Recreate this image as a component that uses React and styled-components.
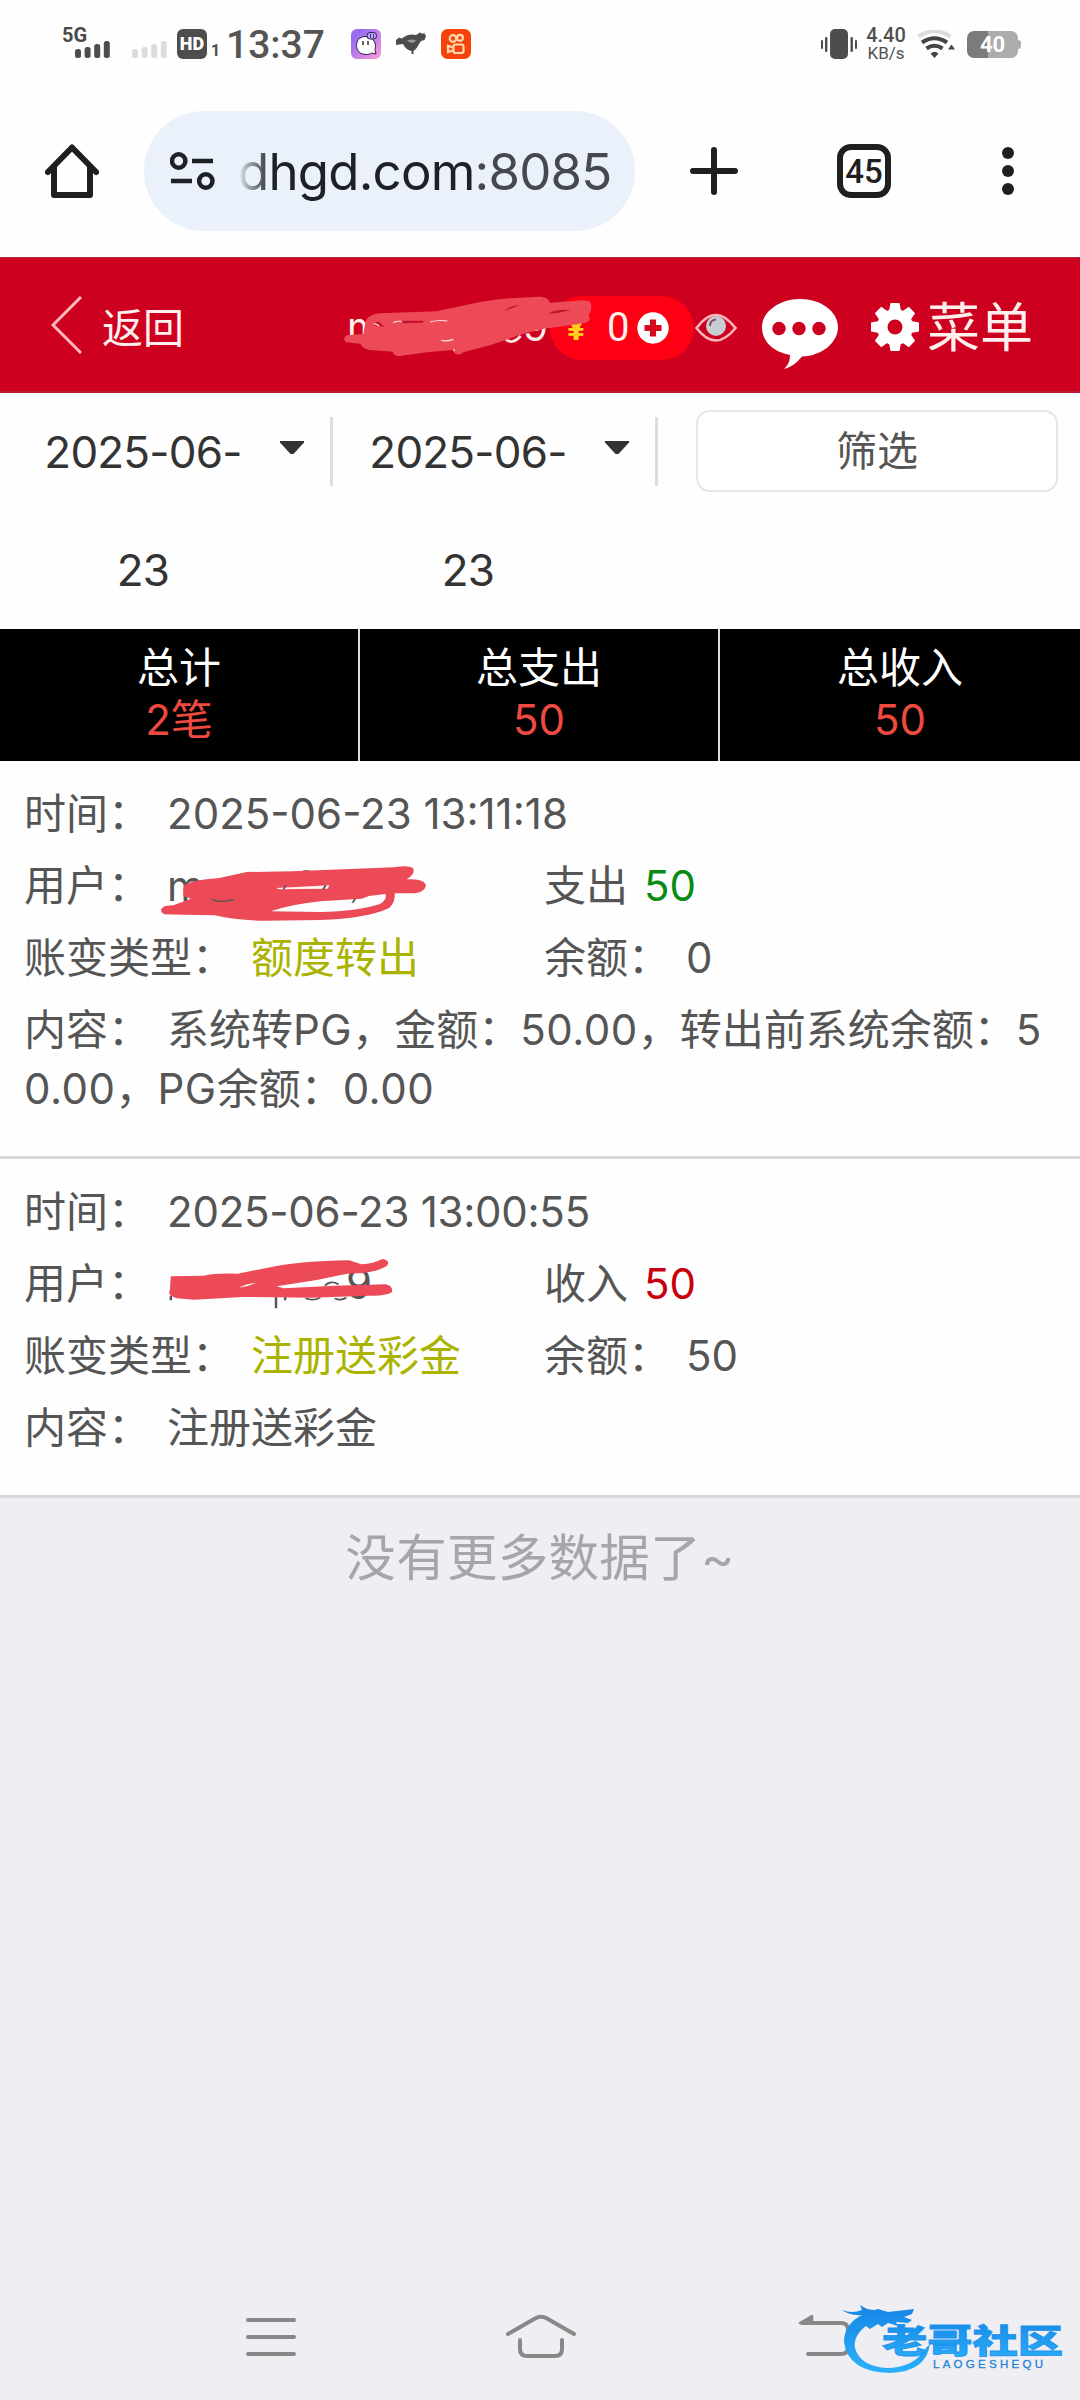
import React from "react";
import styled, { createGlobalStyle } from "styled-components";

const Global = createGlobalStyle`
  * { box-sizing: border-box; }
  body { margin: 0; background: #efeef3; }
  svg { display: block; flex: none; }
`;

const Screen = styled.div`
  width: 1080px;
  height: 2400px;
  display: flex;
  flex-direction: column;
  background: #efeef3;
  overflow: hidden;
  font-family: Inter, "Noto Sans CJK SC", sans-serif;
  font-size: 42px;
  color: #555;
`;

/* ---------- status bar ---------- */
const StatusBar = styled.div`
  height: 87px;
  flex: none;
  display: flex;
  justify-content: space-between;
  align-items: flex-start;
  padding: 25px 59px 0 62px;
  background: #fefefe;
`;
const StatusGroup = styled.div`
  display: flex;
  align-items: center;
  height: 38px;
`;
const Network = styled.div`
  position: relative;
  width: 49px;
  height: 38px;
  display: flex;
  align-items: flex-end;
  padding: 0 0 5px 13px;
`;
const NetworkLabel = styled.span`
  position: absolute;
  left: 0;
  top: 0;
  font: 700 20px/20px Roboto, sans-serif;
  color: #4a4a4a;
`;
const SecondSim = styled.span`
  margin: 11px 0 0 21px;
`;
const HdBadge = styled.span`
  width: 30px;
  height: 30px;
  margin-left: 9px;
  border-radius: 6px;
  background: #4d4d4d;
  color: #fff;
  font: 900 18px/30px Roboto, sans-serif;
  text-align: center;
`;
const SimIndex = styled.span`
  width: 8px;
  margin: 14px 0 0 4px;
  font: 700 16px/16px Roboto, sans-serif;
  color: #4d4d4d;
`;
const Clock = styled.span`
  margin-left: 7px;
  width: 100px;
  font: 500 39px/40px Roboto, sans-serif;
  color: #555;
  padding-top: 2px;
`;
const AppIcons = styled.div`
  display: flex;
  align-items: center;
  gap: 15px;
  margin-left: 25px;
`;
const Speed = styled.div`
  display: flex;
  flex-direction: column;
  align-items: center;
  width: 44px;
  margin: 0 9px 0 7px;
  color: #505050;
  font-family: Roboto, sans-serif;
`;
const SpeedLine = styled.span`
  font-size: ${(p) => p.$size}px;
  line-height: 18px;
  font-weight: ${(p) => p.$weight};
`;
const Battery = styled.div`
  position: relative;
  width: 51px;
  height: 27px;
  margin: 0 3px 0 12px;
  border-radius: 7px;
  background: linear-gradient(90deg, #7b7b7b 0 41%, #acacac 41%);
  color: #fff;
  font: 700 22px/28px Roboto, sans-serif;
  text-align: center;
  &::after {
    content: "";
    position: absolute;
    right: -3px;
    top: 9px;
    width: 3px;
    height: 9px;
    border-radius: 0 3px 3px 0;
    background: #acacac;
  }
`;

const SignalBars = ({ color }) => (
  <svg width="36" height="17" viewBox="0 0 36 17" fill={color}>
    <rect x="0" y="8" width="6" height="9" rx="2.5" />
    <rect x="9.6" y="6" width="6" height="11" rx="2.5" />
    <rect x="19.2" y="3" width="6" height="14" rx="2.5" />
    <rect x="28.8" y="0" width="6" height="17" rx="2.5" />
  </svg>
);

const GhostIcon = () => (
  <svg width="30" height="30" viewBox="0 0 30 30">
    <defs>
      <linearGradient id="ghost" x1="0" y1="0" x2="1" y2="1">
        <stop offset="0.2" stopColor="#9a6cf0" />
        <stop offset="1" stopColor="#ff9ad8" />
      </linearGradient>
    </defs>
    <rect width="30" height="30" rx="6" fill="url(#ghost)" />
    <path d="M14 7.500C8 8 5.500 12 5.500 16.500C5.500 22 9.500 25.500 15 25.500C17.500 25.500 19 25 20.500 24L25 25L24 20.500C26 15 23 8 14 7.500z" fill="#fff" stroke="#2b1b4d" strokeWidth="1" />
    <path d="M12 12v4M17 12v4" stroke="#222" strokeWidth="1.4" />
    <rect x="16" y="3.500" width="9.500" height="6.500" rx="3" fill="#b9a4ff" stroke="#2b1b4d" strokeWidth="1" />
    <path d="M19.500 5v4M22.500 5v4" stroke="#2b1b4d" strokeWidth="0.8" />
  </svg>
);
const BirdIcon = () => (
  <svg width="30" height="24" viewBox="0 0 30 24" fill="#4d4d4d">
    <path d="M0 8L3 5.500L6 6.500C10 3 15 1.500 20 3L24 0.500L27 2L28 0.500L30 4L28.500 8L25 9L23 12C21 16 19 18 17.500 19V22H15.500V19C11 18 9 15.500 7 12L3 12.500L0 13z" />
    <path d="M11 8.500C14 7 17 7 20 8.500C18 11.500 14 11.500 11 8.500z" fill="#999" />
  </svg>
);
const KuaishouIcon = () => (
  <svg width="30" height="30" viewBox="0 0 30 30">
    <rect width="30" height="30" rx="6.5" fill="#f4440b" />
    <g fill="none" stroke="#ffd9b0" strokeWidth="2.2">
      <circle cx="12" cy="9.5" r="3.3" />
      <circle cx="19" cy="8.8" r="3" />
      <rect x="12.5" y="15.5" width="10" height="8.5" rx="2" />
      <path d="M12 18.500L7 16.800V23L12 21.500" />
    </g>
  </svg>
);
const VibrateIcon = () => (
  <svg width="36" height="30" viewBox="0 0 36 30" fill="#4d4d4d">
    <rect x="9" y="0" width="18" height="30" rx="5" />
    <rect x="0" y="11" width="2" height="9" rx="1" />
    <rect x="4" y="8" width="2.4" height="15" rx="1" />
    <rect x="29.5" y="8" width="2.4" height="15" rx="1" />
    <rect x="34" y="11" width="2" height="9" rx="1" />
  </svg>
);
const WifiIcon = () => (
  <svg width="38" height="28" viewBox="0 0 38 28" fill="none">
    <path d="M1.500 6.500Q17.500 -4 33.500 6.500" stroke="#dcdcdc" strokeWidth="4" />
    <path d="M5 12.500Q17.500 4 30 12.500" stroke="#454545" strokeWidth="4" />
    <path d="M9.500 18.500Q17.500 13 25.500 18.500" stroke="#454545" strokeWidth="4" />
    <path d="M13.500 23.500Q17.500 20 21.500 23.500L17.500 28z" fill="#454545" />
    <path d="M31 19.500l3.500-5 3.500 5z" fill="#454545" />
  </svg>
);

/* ---------- browser toolbar ---------- */
const Toolbar = styled.div`
  height: 170px;
  flex: none;
  display: flex;
  align-items: center;
  padding: 0 60px 2px 45px;
  background: #fefefe;
`;
const AddressPill = styled.div`
  width: 491px;
  height: 120px;
  margin: 0 55px 0 45px;
  padding: 0 0 0 26px;
  border-radius: 60px;
  background: #eaf1fb;
  display: flex;
  align-items: center;
`;
const Url = styled.div`
  width: 380px;
  margin-left: 23px;
  padding-top: 2px;
  white-space: nowrap;
  font-family: Inter, sans-serif;
  font-size: 51px;
  line-height: 70px;
  letter-spacing: -0.8px;
  color: #1d2024;
  mask-image: linear-gradient(90deg, rgba(0, 0, 0, 0.05), #000 34px);
`;
const Port = styled.span`
  color: #45494d;
`;
const TabCount = styled.div`
  width: 54px;
  height: 54px;
  margin: 0 111px 0 99px;
  border: 6px solid #1f1f1f;
  border-radius: 14px;
  font: 500 33px/43px Roboto, sans-serif;
  text-align: center;
  color: #1f1f1f;
`;

const HomeIcon = () => (
  <svg width="54" height="54" viewBox="0 0 54 54" fill="none" stroke="#1f1f1f" strokeWidth="6" strokeLinecap="round" strokeLinejoin="round">
    <path d="M3 28L27 3.500 51 28" />
    <path d="M9 23V51H45V23" />
  </svg>
);
const TuneIcon = () => (
  <svg width="45" height="38" viewBox="0 0 45 38" fill="none" stroke="#1d2024" strokeWidth="4.500">
    <circle cx="8.700" cy="9" r="6.700" />
    <path d="M22 9H43M1 29H22" />
    <circle cx="35.800" cy="29" r="6.700" />
  </svg>
);
const PlusIcon = () => (
  <svg width="48" height="48" viewBox="0 0 48 48" stroke="#1f1f1f" strokeWidth="6" strokeLinecap="round">
    <path d="M24 3V45M3 24H45" />
  </svg>
);
const DotsIcon = () => (
  <svg width="12" height="48" viewBox="0 0 12 48" fill="#1f1f1f">
    <circle cx="6" cy="6" r="6" />
    <circle cx="6" cy="24" r="6" />
    <circle cx="6" cy="42" r="6" />
  </svg>
);

/* ---------- site header ---------- */
const Header = styled.header`
  position: relative;
  height: 136px;
  flex: none;
  display: flex;
  align-items: center;
  padding-left: 51px;
  background: #ce001f;
  border-top: 1px solid #ad2b3c;
  border-bottom: 2px solid #b81c35;
  color: #fff0ee;
`;
const BackLabel = styled.span`
  margin-left: 20px;
  width: 84px;
  padding-top: 6px;
  font-size: 41px;
  line-height: 60px;
`;
const Account = styled.div`
  width: 203px;
  margin-left: 161px;
  display: flex;
  justify-content: space-between;
  padding: 5px 2px 0 0;
  font-size: 40px;
  line-height: 50px;
`;
const BalancePill = styled.div`
  width: 144px;
  height: 64px;
  margin: 6px 1px 0 0;
  padding: 0 24px 0 17px;
  border-radius: 32px;
  background: #fd0013;
  display: flex;
  align-items: center;
`;
const Yen = styled.span`
  width: 21px;
  color: #ffd21c;
  font: 700 34px/60px Roboto, sans-serif;
`;
const Balance = styled.span`
  width: 20px;
  margin: 0 10px 0 19px;
  font: 400 40px/62px Roboto, sans-serif;
`;
const MenuLabel = styled.span`
  margin: 7px 0 0 8px;
  font-size: 53px;
  line-height: 70px;
`;
const Spacer = styled.span`
  width: ${(p) => p.$w}px;
  flex: none;
`;
const Drop = styled.span`
  margin-top: ${(p) => p.$by}px;
`;
const HeaderScribble = styled.svg`
  position: absolute;
  left: 330px;
  top: 12px;
`;

const BackIcon = () => (
  <svg width="31" height="58" viewBox="0 0 31 58" fill="none" stroke="#ffb9b9" strokeWidth="3">
    <path d="M30 1L2 29 30 57" />
  </svg>
);
const AddIcon = () => (
  <svg width="32" height="32" viewBox="0 0 32 32">
    <circle cx="16" cy="16" r="15.700" fill="#fff" />
    <path d="M16 7.500V24.500M7.500 16H24.500" stroke="#d40a20" strokeWidth="6" />
  </svg>
);
const EyeIcon = () => (
  <svg width="42" height="30" viewBox="0 0 42 30">
    <path d="M1.500 15Q20.500 -11 40.500 15Q20.500 40 1.500 15z" fill="#ce001f" stroke="#ffb5b9" strokeWidth="2.600" />
    <circle cx="21" cy="13" r="10" fill="#c7cdd1" />
    <path d="M15 13Q15 7 21 6.500" fill="none" stroke="#7c5560" strokeWidth="2" />
  </svg>
);
const ChatIcon = () => (
  <svg width="76" height="70" viewBox="0 0 76 70">
    <path d="M38 0C59 0 76 12.500 76 28S60 57 40 57.500C36 62 31 68 22 70C27 65 28 61 28 56C12 53 0 43 0 28S17 0 38 0z" fill="#fff" />
    <g fill="#ce001f">
      <circle cx="17" cy="29.500" r="6.700" />
      <circle cx="37" cy="29.500" r="6.700" />
      <circle cx="57" cy="29.500" r="6.700" />
    </g>
  </svg>
);
const GearIcon = () => (
  <svg width="48" height="48" viewBox="0 0 48 48">
    <g fill="#fff">
      <circle cx="24" cy="24" r="18" />
      {[0, 45, 90, 135].map((a) => (
        <path key={a} d="M19.500 0H28.500L30 8V40L28.500 48H19.500L18 40V8z" transform={`rotate(${a} 24 24)`} />
      ))}
    </g>
    <circle cx="24" cy="24" r="7.500" fill="#ce001f" />
  </svg>
);

/* ---------- filter ---------- */
const Filter = styled.div`
  height: 236px;
  flex: none;
  display: flex;
  align-items: flex-start;
  background: #fefefe;
`;
const DateSelect = styled.div`
  width: ${(p) => p.$w}px;
  height: 236px;
  display: flex;
  align-items: flex-start;
  padding-left: ${(p) => p.$inset}px;
`;
const DateText = styled.div`
  width: 200px;
  text-align: center;
  white-space: nowrap;
  font-size: 44px;
  line-height: 118px;
  letter-spacing: -0.8px;
  color: #333;
`;
const Caret = styled.span`
  width: 24px;
  height: 13px;
  margin: 48px 0 0 37px;
  background: #333;
  clip-path: polygon(0 0, 100% 0, 100% 12%, 56% 100%, 44% 100%, 0 12%);
`;
const Divider = styled.span`
  width: 3px;
  height: 69px;
  margin: 24px 0 0 auto;
  background: #ddd;
`;
const FilterButton = styled.button`
  width: 362px;
  height: 82px;
  margin: 17px 0 0 38px;
  border: 2.5px solid #e6e6e6;
  border-radius: 14px;
  background: #fff;
  color: #555;
  font: 400 41px/74px Inter, "Noto Sans CJK SC", sans-serif;
  padding: 0;
`;

/* ---------- summary ---------- */
const Summary = styled.div`
  height: 132px;
  flex: none;
  display: grid;
  grid-template-columns: repeat(3, 1fr);
  background: #000;
`;
const SummaryCell = styled.div`
  display: flex;
  flex-direction: column;
  align-items: center;
  padding-top: 13px;
  line-height: 52px;
  color: #fff;
  border-right: ${(p) => (p.$last ? 0 : 2)}px solid #ddd;
`;
const SummaryValue = styled.span`
  color: #ee4a40;
`;

/* ---------- records ---------- */
const Card = styled.section`
  flex: none;
  padding: 17px 24px ${(p) => p.$bottom}px;
  background: #fefefe;
  border-bottom: 3px solid #d9d9da;
`;
const Row = styled.div`
  height: 72px;
  display: flex;
  line-height: 72px;
  white-space: nowrap;
`;
const Cell = styled.div`
  width: 520px;
  display: flex;
  flex: none;
`;
const Value = styled.span`
  position: relative;
  margin-left: ${(p) => p.$gap || 17}px;
  color: ${(p) => p.$color || "inherit"};
  letter-spacing: ${(p) => p.$track || 0}px;
`;
const Hidden = styled.span`
  display: inline-block;
  width: ${(p) => p.$w}px;
`;
const Content = styled.div`
  margin-top: 6px;
  line-height: 59px;
`;
const Latin = styled.span`
  letter-spacing: 0.5px;
`;
const RowScribble = styled.svg`
  position: absolute;
  left: ${(p) => p.$left}px;
  top: ${(p) => p.$top}px;
`;
const EndNote = styled.div`
  margin-top: 25px;
  flex: none;
  text-align: center;
  font-size: 50.5px;
  line-height: 70px;
  letter-spacing: 0.3px;
  color: #a6a6a8;
`;

/* ---------- system navigation ---------- */
const NavBar = styled.nav`
  position: relative;
  height: 130px;
  flex: none;
  margin-top: auto;
  display: flex;
  align-items: flex-start;
  padding-left: 246px;
`;
const Watermark = styled.svg`
  position: absolute;
  left: 836px;
  top: 20px;
`;

const MenuLines = () => (
  <svg width="50" height="60" viewBox="0 0 50 60" stroke="#888" strokeWidth="4" strokeLinecap="round">
    <path d="M2 20H48M2 37H48M2 54H48" />
  </svg>
);
const NavHome = () => (
  <svg width="70" height="60" viewBox="0 0 70 60" fill="none" stroke="#888" strokeWidth="4" strokeLinecap="round">
    <path d="M2 34L29 18.500Q35 15 41 18.500L68 34" />
    <path d="M14 40V49Q14 56 21 56H49Q56 56 56 49V40" />
  </svg>
);
const NavBack = () => (
  <svg width="54" height="60" viewBox="0 0 54 60" fill="none" stroke="#888" strokeWidth="4" strokeLinecap="round">
    <path d="M4 23H43Q50 23 50 30V47Q50 54 43 54H10" />
    <path d="M2 23L14 16V23z" fill="#888" strokeWidth="2.500" strokeLinejoin="round" />
  </svg>
);

const INK = "#ec4a57";

export default function App() {
  return (
    <Screen>
      <Global />
      <StatusBar>
        <StatusGroup>
          <Network>
            <NetworkLabel>5G</NetworkLabel>
            <SignalBars color="#4d4d4d" />
          </Network>
          <SecondSim>
            <SignalBars color="#dcdcdc" />
          </SecondSim>
          <HdBadge>HD</HdBadge>
          <SimIndex>1</SimIndex>
          <Clock>13:37</Clock>
          <AppIcons>
            <GhostIcon />
            <BirdIcon />
            <KuaishouIcon />
          </AppIcons>
        </StatusGroup>
        <StatusGroup>
          <VibrateIcon />
          <Speed>
            <SpeedLine $size={20} $weight={500}>4.40</SpeedLine>
            <SpeedLine $size={17} $weight={400}>KB/s</SpeedLine>
          </Speed>
          <WifiIcon />
          <Battery>40</Battery>
        </StatusGroup>
      </StatusBar>

      <Toolbar>
        <HomeIcon />
        <AddressPill>
          <TuneIcon />
          <Url>dhgd.com<Port>:8085</Port></Url>
        </AddressPill>
        <PlusIcon />
        <TabCount>45</TabCount>
        <DotsIcon />
      </Toolbar>

      <Header>
        <BackIcon />
        <BackLabel>返回</BackLabel>
        <Account>
          <span>m</span>
          <span>9</span>
        </Account>
        <BalancePill>
          <Yen>¥</Yen>
          <Balance>0</Balance>
          <AddIcon />
        </BalancePill>
        <Drop $by={7}>
          <EyeIcon />
        </Drop>
        <Spacer $w={25} />
        <Drop $by={19}>
          <ChatIcon />
        </Drop>
        <Spacer $w={33} />
        <Drop $by={4}>
          <GearIcon />
        </Drop>
        <MenuLabel>菜单</MenuLabel>
        <HeaderScribble width="370" height="110" viewBox="0 0 1110 330">
          <path d="M524 204Q545 228 572 198" fill="none" stroke="#ffe9e7" strokeWidth="8" />
          <path
            d="M50 196Q36 205 48 217L90 221Q105 242 130 241L188 245Q192 262 215 257L290 247L368 240Q380 264 402 246L480 226L590 188Q650 172 690 170L768 158Q785 150 776 136Q788 118 782 98Q770 88 740 92L660 98Q655 80 630 80Q540 82 450 96L320 124L150 130Q110 134 106 158L100 192z"
            fill={INK}
          />
          <path d="M522 124Q540 106 570 105Q545 114 522 124zM654 131Q680 116 722 120Q690 130 654 131zM128 166Q138 150 150 158L162 170zM215 152H280V158L220 160z" fill="#c5102c" />
          <path d="M190 158Q198 153 214 154M300 156Q325 149 352 153M334 211Q352 215 370 208M130 162Q138 160 148 168M372 238V244" fill="none" stroke="#ffe3e3" strokeWidth="3.500" />
        </HeaderScribble>
      </Header>

      <Filter>
        <DateSelect $w={333} $inset={43}>
          <DateText>2025-06-<br />23</DateText>
          <Caret />
          <Divider />
        </DateSelect>
        <DateSelect $w={325} $inset={35}>
          <DateText>2025-06-<br />23</DateText>
          <Caret />
          <Divider />
        </DateSelect>
        <FilterButton>筛选</FilterButton>
      </Filter>

      <Summary>
        <SummaryCell>
          总计<SummaryValue>2笔</SummaryValue>
        </SummaryCell>
        <SummaryCell>
          总支出<SummaryValue>50</SummaryValue>
        </SummaryCell>
        <SummaryCell $last>
          总收入<SummaryValue>50</SummaryValue>
        </SummaryCell>
      </Summary>

      <Card $bottom={38}>
        <Row>
          时间：<Value>2025-06-23 13:11:18</Value>
        </Row>
        <Row>
          <Cell>
            用户：
            <Value>
              m
              <RowScribble $left={-12} $top={10} width="275.5" height="66.700" viewBox="340 300 600 200" preserveAspectRatio="none">
                <path d="M655 340Q668 326 682 338M735 338Q745 330 750 336" fill="none" stroke="#555" strokeWidth="4" />
                <path
                  d="M404 374Q400 392 402 408L418 416L380 436L362 438Q345 450 360 463L400 464L470 466Q520 482 580 482L700 480Q800 476 850 444Q864 425 862 400L906 400Q930 394 930 374Q924 356 888 358Q908 342 902 324Q890 314 860 322L750 328L640 334L540 336L480 354Q430 358 404 374zM592 454Q640 432 700 424L790 416L806 408L842 402Q846 420 830 432Q780 454 700 456z"
                  fill={INK}
                  fillRule="evenodd"
                />
                <path d="M604 384L720 376L716 386L610 388z" fill="#fff1f1" />
                <path d="M624 376L620 388M712 376L706 388M776 416L770 428M464 418Q480 430 512 418" fill="none" stroke="#555" strokeWidth="4" />
              </RowScribble>
            </Value>
          </Cell>
          <Cell>
            支出<Value $gap={16} $color="#0a8a12">50</Value>
          </Cell>
        </Row>
        <Row>
          <Cell>
            账变类型：<Value $color="#aab400">额度转出</Value>
          </Cell>
          <Cell>
            余额：<Value $gap={16}>0</Value>
          </Cell>
        </Row>
        <Content>
          内容：<Value>系统转<Latin>PG</Latin>，金额：<Latin>50.00</Latin>，转出前系统余额：5</Value>
          <br />
          <Latin>0.00</Latin>，<Latin>PG</Latin>余额：<Latin>0.00</Latin>
        </Content>
      </Card>

      <Card $bottom={38}>
        <Row>
          时间：<Value $track={-0.25}>2025-06-23 13:00:55</Value>
        </Row>
        <Row>
          <Cell>
            用户：
            <Value>
              <Hidden $w={179} />9
              <RowScribble $left={-2} $top={9} width="232.700" height="53.300" viewBox="340 380 480 160" preserveAspectRatio="none">
                <path d="M352 496V510M569 500V534M588 500V510M630 504Q645 513 660 502M690 504Q702 513 714 502M670 466Q682 448 698 462" fill="none" stroke="#555" strokeWidth="5" />
                <path
                  d="M352 438L420 436Q440 428 490 430L560 410Q620 392 720 390L745 402Q770 400 788 386Q806 390 798 406Q780 422 750 428L716 430L650 450L570 468L585 474L690 466L795 462Q812 468 808 486Q795 498 760 496L640 502L500 500L400 508L364 504Q344 494 350 480z"
                  fill={INK}
                />
                <path d="M492 472Q508 460 528 458Q510 470 492 472z" fill="#fff" />
              </RowScribble>
            </Value>
          </Cell>
          <Cell>
            收入<Value $gap={16} $color="#c8000d">50</Value>
          </Cell>
        </Row>
        <Row>
          <Cell>
            账变类型：<Value $color="#aab400">注册送彩金</Value>
          </Cell>
          <Cell>
            余额：<Value $gap={16}>50</Value>
          </Cell>
        </Row>
        <Content>
          内容：<Value>注册送彩金</Value>
        </Content>
      </Card>

      <EndNote>没有更多数据了~</EndNote>

      <NavBar>
        <Drop $by={30}>
          <MenuLines />
        </Drop>
        <Spacer $w={210} />
        <Drop $by={30}>
          <NavHome />
        </Drop>
        <Spacer $w={222} />
        <Drop $by={30}>
          <NavBack />
        </Drop>
        <Watermark width="240" height="90" viewBox="0 0 240 90">
          <defs>
            <linearGradient id="wave" x1="0" y1="0" x2="0" y2="1">
              <stop offset="0" stopColor="#1585e4" />
              <stop offset="1" stopColor="#2cb1fb" />
            </linearGradient>
          </defs>
          <path
            d="M6 20Q16 24 26 20L24 15Q34 22 42 19L52 22L70 20L78 19L76 24L68 27L76 30L72 33L60 32L62 36L52 33L46 37L42 34L34 39L30 36Q17 46 19 58Q24 76 50 78Q78 78 90 58L94 54Q90 82 54 83Q12 82 8 52Q8 34 26 25Q14 26 6 20z"
            fill="url(#wave)"
          />
          <text x="46" y="63" textLength="181" lengthAdjust="spacingAndGlyphs" fontFamily="'Noto Sans CJK SC', sans-serif" fontWeight="900" fontSize="33" fill="url(#wave)" stroke="#1c93ee" strokeWidth="0.800">
            老哥社区
          </text>
          <text x="97" y="77.500" textLength="110" fontFamily="'Liberation Sans', sans-serif" fontSize="11.500" fill="#1f83d8" stroke="#1f83d8" strokeWidth="0.300">
            LAOGESHEQU
          </text>
        </Watermark>
      </NavBar>
    </Screen>
  );
}
